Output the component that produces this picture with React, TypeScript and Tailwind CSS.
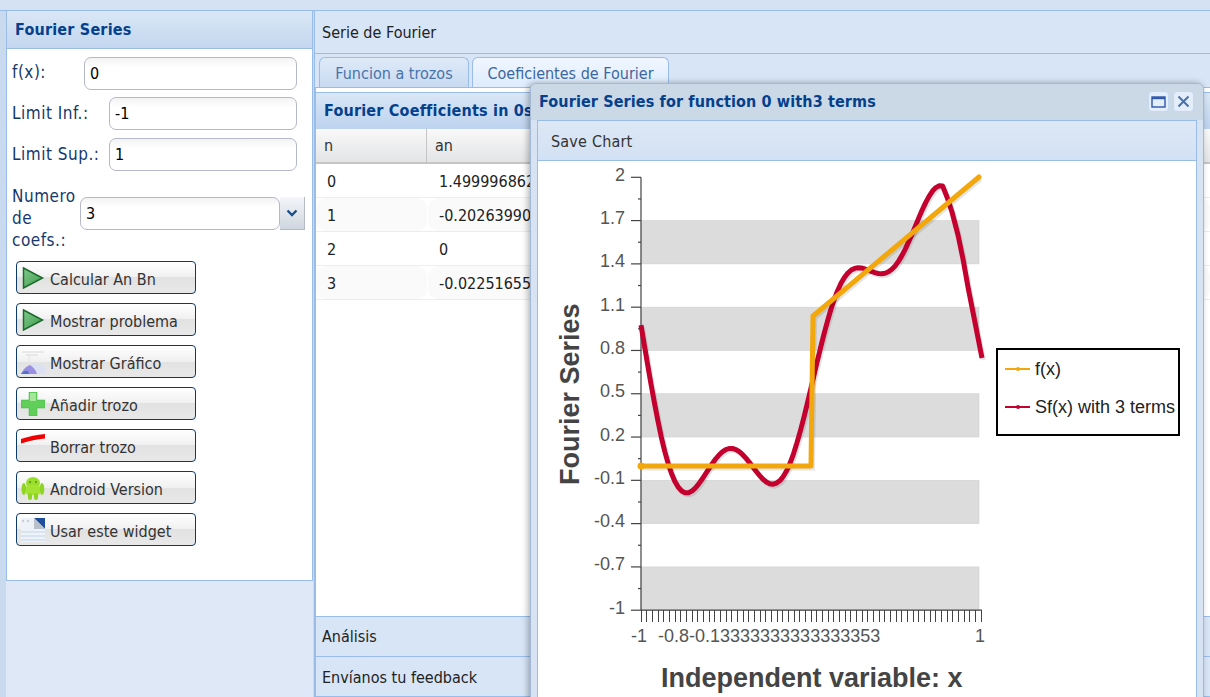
import React from 'react'

const UI_FONT = "font-['DejaVu_Sans_Condensed','Noto_Sans',sans-serif]"

function PlayIcon() {
  return (
    <svg width="24" height="24" viewBox="0 0 24 24">
      <defs>
        <linearGradient id="play" x1="0" y1="0" x2="1" y2="1">
          <stop offset="0" stopColor="#7fc98a" />
          <stop offset="1" stopColor="#3f9a4c" />
        </linearGradient>
      </defs>
      <path d="M2.5 2 L21.5 12 L2.5 22 Z" fill="url(#play)" stroke="#1d6a2c" strokeWidth="1.5" />
    </svg>
  )
}

function ChartIcon() {
  return (
    <svg width="24" height="24" viewBox="0 0 24 24">
      <path d="M1 2 H23 M5 5 H17" stroke="#d8d8d8" strokeWidth="1" />
      <path d="M8 6 V16" stroke="#e5e5e5" />
      <path d="M0 24 C3 17 8 13 15 14 L24 16 V24 Z" fill="#dbe0f2" />
      <path d="M0 24 C2 19 6 16 9 15 C12 17 15 20 16 24 Z" fill="#9a8fe0" />
      <path d="M0 24 C2 21 5 20 7 21 L8 24 Z" fill="#4f73c9" />
    </svg>
  )
}

function PlusIcon() {
  return (
    <svg width="24" height="24" viewBox="0 0 24 24">
      <path d="M8 0 H16 V8 H24 V16 H16 V24 H8 V16 H0 V8 H8 Z" fill="#5fcf5a" stroke="#45b045" strokeWidth="0.5" />
      <rect x="9" y="1" width="6" height="8" fill="#a4e79b" />
    </svg>
  )
}

function StrokeIcon() {
  return (
    <svg width="24" height="24" viewBox="0 0 24 24">
      <path d="M0 5 C8 2.5 16 0.5 24 0 V4.5 C16 5 8 7 0 9.5 Z" fill="#f00000" />
    </svg>
  )
}

function AndroidIcon() {
  return (
    <svg width="24" height="24" viewBox="0 0 24 24">
      <ellipse cx="12" cy="7" rx="7" ry="6" fill="#9ade2c" />
      <rect x="5" y="9" width="14" height="10" rx="3" fill="#a5e332" />
      <ellipse cx="2.8" cy="13" rx="2.3" ry="6" fill="#8fd425" />
      <ellipse cx="21" cy="13" rx="2.3" ry="6" fill="#8fd425" />
      <rect x="7" y="17" width="4" height="7" rx="2" fill="#8fd425" />
      <rect x="13" y="17" width="4" height="7" rx="2" fill="#8fd425" />
      <circle cx="9" cy="6" r="1" fill="#5a8a14" />
      <circle cx="15" cy="6" r="1" fill="#5a8a14" />
    </svg>
  )
}

function WidgetIcon() {
  return (
    <svg width="24" height="24" viewBox="0 0 24 24">
      <rect x="0" y="0" width="24" height="24" fill="#eef3f9" />
      <path d="M13 0 H24 V11 Z" fill="#1f4f9c" />
      <path d="M13 0 L24 11 H13 Z" fill="#b9c2cc" />
      <circle cx="2" cy="3" r="1.2" fill="#ccd" />
      <circle cx="7" cy="3" r="1.2" fill="#ccd" />
      <path d="M0 14 H24 M0 18 H24 M0 22 H24" stroke="#c4d6ea" strokeWidth="1.2" />
    </svg>
  )
}

const buttons = [
  { label: 'Calcular An Bn', icon: <PlayIcon /> },
  { label: 'Mostrar problema', icon: <PlayIcon /> },
  { label: 'Mostrar Gráfico', icon: <ChartIcon /> },
  { label: 'Añadir trozo', icon: <PlusIcon /> },
  { label: 'Borrar trozo', icon: <StrokeIcon /> },
  { label: 'Android Version', icon: <AndroidIcon /> },
  { label: 'Usar este widget', icon: <WidgetIcon /> },
]

const inputClass =
  'h-[33px] rounded-[7px] border border-[#b5b8c8] bg-gradient-to-b from-[#f3f3f3] to-white to-[30%] px-[5px] text-[16px] tracking-normal text-black flex items-center'

function Sidebar() {
  return (
    <div className="w-[307px] ml-[6px] flex flex-col shrink-0">
      <div className="border-x border-b border-[#99bce8] h-[570px] flex flex-col">
        <div className="h-[38px] shrink-0 border-b border-[#99bce8] bg-gradient-to-b from-[#dae7f6] to-[#c3d7ef] flex items-center px-2 text-[16px] tracking-[0.2px] font-bold text-[#04408c]">
          Fourier Series
        </div>
        <div className="flex-1 bg-white px-[5px] pt-2 text-[17px] tracking-[0.5px] text-[#15396b]">
          <div className="flex items-center gap-[10px] pr-[10px]">
            <span className="w-[62px] -mt-[2px]">f(x):</span>
            <div className={inputClass + ' flex-1'}>0</div>
          </div>
          <div className="flex items-center mt-[7px] pr-[10px]">
            <span className="w-[97px]">Limit Inf.:</span>
            <div className={inputClass + ' flex-1'}>-1</div>
          </div>
          <div className="flex items-center mt-2 pr-[10px]">
            <span className="w-[97px]">Limit Sup.:</span>
            <div className={inputClass + ' flex-1'}>1</div>
          </div>
          <div className="flex mt-[13px]">
            <span className="w-[68px] pt-[1px] pr-[2px] leading-[22px]">Numero de coefs.:</span>
            <div className="flex h-[33px] mt-[13px]">
              <div className={inputClass + ' w-[200px]'}>3</div>
              <div className="w-[25px] bg-gradient-to-b from-[#f4f6f9] to-[#cfd6df] border-r border-b border-[#b5b8c8] flex items-center justify-center">
                <svg width="12" height="8" viewBox="0 0 12 8">
                  <path d="M1.5 1.5 L6 6 L10.5 1.5" fill="none" stroke="#1d4f86" strokeWidth="2.4" />
                </svg>
              </div>
            </div>
          </div>
          <div className="flex flex-col gap-[9px] mt-[10px] ml-[4px] text-[16px] tracking-normal">
            {buttons.map((b) => (
              <div
                key={b.label}
                className="relative w-[180px] h-[33px] rounded-[4px] border border-[#0f3a68] bg-[linear-gradient(#ffffff,#f0f0f0_50%,#e2e2e2_50%,#e8e8e8)] flex items-center text-[#333]"
              >
                <span className="absolute left-1 top-1">{b.icon}</span>
                <span className="ml-[33px] mt-[4px]">{b.label}</span>
              </div>
            ))}
          </div>
        </div>
      </div>
      <div className="flex-1 bg-[#dfe8f6]" />
    </div>
  )
}

const rows = [
  ['0', '1.4999968623'],
  ['1', '-0.2026399057'],
  ['2', '0'],
  ['3', '-0.0225165518'],
]

function MainPanel() {
  return (
    <div className="flex-1 ml-[1px] flex flex-col border-l border-[#99bce8] min-w-0 bg-[#dfe8f6]">
      <div className="h-[43px] shrink-0 bg-[#d8e5f6] border-b border-[#99bce8] flex items-center px-[7px] pt-[2px] text-[16px] text-[#222]">
        Serie de Fourier
      </div>
      <div className="h-[34px] shrink-0 bg-[#d8e5f6] flex items-end pl-1 gap-[3px] border-b border-[#99bce8]">
        <div className="h-[30px] w-[150px] pt-[3px] rounded-t-[6px] border border-b-0 border-[#99bce8] bg-gradient-to-b from-[#dfeaf8] to-[#c8daf1] flex items-center justify-center text-[16px] text-[#4a73a8]">
          Funcion a trozos
        </div>
        <div className="h-[30px] w-[197px] pt-[3px] rounded-t-[6px] border border-b-0 border-[#99bce8] bg-gradient-to-b from-[#f0f6fe] to-[#deecfd] flex items-center justify-center text-[16px] text-[#3c679e]">
          Coeficientes de Fourier
        </div>
      </div>
      <div className="flex-1 min-h-0 border-l border-[#99bce8] flex flex-col bg-white">
        <div className="h-[37px] mt-[4px] shrink-0 bg-gradient-to-b from-[#dae7f6] to-[#bcd2ee] border-t border-[#99bce8] flex items-center px-2 text-[16px] tracking-[0.2px] font-bold text-[#04408c]">
          Fourier Coefficients in 0s
        </div>
        <div className="h-[35px] shrink-0 flex bg-gradient-to-b from-[#f9f9f9] to-[#e3e4e6] border-b-2 border-[#c5c5c5] text-[16px] text-[#333]">
          <div className="w-[111px] border-r border-[#c5c5c5] px-2 flex items-center">n</div>
          <div className="px-2 flex items-center">an</div>
        </div>
        {rows.map(([n, an], i) => (
          <div key={n} className="h-[34px] shrink-0 flex border-b border-[#ededed] text-[16px] text-[#222]">
            <div className={'w-[111px] px-[11px] pt-[3px] flex items-center rounded-[10px] ' + (i % 2 ? 'bg-[#fafafa]' : '')}>{n}</div>
            <div className={'flex-1 ml-[1px] px-[11px] pt-[3px] flex items-center rounded-[10px] ' + (i % 2 ? 'bg-[#fafafa]' : '')}>{an}</div>
          </div>
        ))}
        <div className="flex-1" />
        <div className="h-[41px] shrink-0 bg-[#d8e5f6] border-y border-[#99bce8] flex items-center px-[6px] text-[16px] text-[#222]">
          Análisis
        </div>
        <div className="h-[40px] shrink-0 bg-[#d8e5f6] border-b border-[#99bce8] flex items-center px-[6px] pt-[3px] text-[16px] text-[#222]">
          Envíanos tu feedback
        </div>
      </div>
    </div>
  )
}

// chart scale, in page pixels minus the chart origin (538, 161)
const ox = 538
const oy = 161
const xAt = (x: number) => 641 - ox + (x + 1) * 169.5
const yAt = (v: number) => 177.3 - oy + (2 - v) * 144.3

function series(x: number) {
  const p = Math.PI * x
  return (
    0.75 - 0.2026 * Math.cos(p) - 0.0225 * Math.cos(3 * p) +
    0.955 * Math.sin(p) - 0.159 * Math.sin(2 * p) + 0.318 * Math.sin(3 * p)
  )
}

function redPoints() {
  const pts: string[] = []
  for (let x = -1; x <= 0.79; x += 0.02) pts.push(xAt(x).toFixed(1) + ',' + yAt(series(x)).toFixed(1))
  // the tail falls off straighter than the series does
  const tail = [[947, 197], [952, 212], [958, 235], [963, 259], [968, 287], [982, 358]]
  tail.forEach(([x, y]) => pts.push(x - ox + ',' + (y - oy)))
  return pts.join(' ')
}

const orangePoints = [
  [641, 466], [811, 466], [813, 316], [979, 177],
].map(([x, y]) => x - ox + ',' + (y - oy)).join(' ')

const yLabels = ['2', '1.7', '1.4', '1.1', '0.8', '0.5', '0.2', '-0.1', '-0.4', '-0.7', '-1']

function Chart() {
  const red = redPoints()
  const xTicks = Array.from({ length: 61 }, (_, i) => 641 - ox + i * 5.67)
  return (
    <svg width="658" height="540" className="block">
      {[1.7, 1.1, 0.5, -0.1, -0.7].map((v) => (
        <rect key={v} x={xAt(-1)} y={yAt(v)} width="338" height={0.3 * 144.3} fill="#dcdcdc" stroke="#d0d0d0" strokeWidth="0.6" />
      ))}
      <path d={'M' + xAt(-1) + ' ' + yAt(2) + ' V' + yAt(-1)} stroke="#444" strokeWidth="1.2" />
      {yLabels.map((l, i) => {
        const y = yAt(2 - i * 0.3)
        return (
          <g key={l}>
            <path d={'M' + (xAt(-1) - 10) + ' ' + y + ' H' + xAt(-1)} stroke="#444" strokeWidth="1.2" />
            {i < 10 && <path d={'M' + (xAt(-1) - 3) + ' ' + (y + 21.65) + ' H' + xAt(-1)} stroke="#444" strokeWidth="1.2" />}
            <text x={xAt(-1) - 16} y={y + 3.5} textAnchor="end" fontSize="18" fill="#555" fontFamily="'Liberation Sans',sans-serif">{l}</text>
          </g>
        )
      })}
      <path d={'M' + xAt(-1) + ' ' + yAt(-1) + ' H' + (982 - ox)} stroke="#444" strokeWidth="1.2" />
      {xTicks.map((x) => (
        <path key={x} d={'M' + x + ' ' + yAt(-1) + ' v12'} stroke="#444" strokeWidth="1" shapeRendering="crispEdges" />
      ))}
      <g fontSize="18" fill="#555" fontFamily="'Liberation Sans',sans-serif">
        <text x={xAt(-1) - 10} y="481">-1</text>
        <text x={658 - ox} y="481">-0.8-0.13333333333333353</text>
        <text x={975 - ox} y="481">1</text>
      </g>
      <text x={661 - ox} y="526" fontSize="27" fontWeight="bold" fill="#444" fontFamily="'Liberation Sans',sans-serif">Independent variable: x</text>
      <text transform={'translate(' + (579 - ox) + ',' + (485 - oy) + ') rotate(-90)'} fontSize="27" fontWeight="bold" fill="#444" fontFamily="'Liberation Sans',sans-serif">Fourier Series</text>
      <polyline points={red} fill="none" stroke="#000" strokeOpacity="0.1" strokeWidth="5" transform="translate(1.5,2)" />
      <polyline points={red} fill="none" stroke="#c4002f" strokeWidth="5" strokeLinejoin="round" />
      <polyline points={orangePoints} fill="none" stroke="#000" strokeOpacity="0.1" strokeWidth="5" transform="translate(1.5,2)" />
      <polyline points={orangePoints} fill="none" stroke="#f2a80c" strokeWidth="5" strokeLinejoin="round" strokeLinecap="round" />
      <circle cx={641 - ox} cy={466 - oy} r="3.5" fill="#f2a80c" />
    </svg>
  )
}

function ChartWindow() {
  return (
    <div className="absolute left-[530px] top-[83px] w-[674px] h-[640px] rounded-t-[6px] border border-[#a3b8d4] bg-[#d7e3f3] shadow-[-2px_0_6px_rgba(0,0,0,0.3)] px-[6px]">
      <div className="h-[36px] -mx-[6px] px-2 rounded-t-[6px] bg-[#cbd8e6] flex items-center text-[16px] tracking-[0.12px] font-bold text-[#04408c]">
        Fourier Series for function 0 with3 terms
      </div>
      <div className="absolute right-[9px] top-[7px] flex gap-[4px]">
        <div className="w-[21px] h-[21px] rounded-[4px] border border-[#c3d9f3] bg-[#e4eefb] flex items-center justify-center">
          <svg width="15" height="12" viewBox="0 0 15 12">
            <rect x="1" y="1" width="13" height="10" fill="none" stroke="#2f55a8" strokeWidth="1.4" />
            <path d="M1 2.2 H14" stroke="#2f55a8" strokeWidth="2" />
          </svg>
        </div>
        <div className="w-[21px] h-[21px] rounded-[4px] border border-[#c3d9f3] bg-[#e4eefb] flex items-center justify-center">
          <svg width="13" height="13" viewBox="0 0 13 13">
            <path d="M1.5 1.5 L11.5 11.5 M11.5 1.5 L1.5 11.5" stroke="#4a72a8" strokeWidth="2" />
          </svg>
        </div>
      </div>
      <div className="border border-[#99bce8] bg-white">
        <div className="h-[40px] bg-gradient-to-b from-[#dee8f5] to-[#d2e1f4] border-b border-[#99bce8] flex items-center px-[13px] pt-[3px] text-[16px] tracking-[0.2px] text-[#333]">
          Save Chart
        </div>
        <div className="relative">
          <Chart />
          <div className="absolute left-[458px] top-[187px] w-[184px] h-[88px] border-2 border-black bg-white font-['Liberation_Sans',sans-serif] text-[18px] text-[#222]">
            <div className="flex items-center h-[22px] mt-[8px] pl-[7px]">
              <span className="relative w-[25px] h-[2px] bg-[#f2a80c] mr-[5px]">
                <span className="absolute left-[11px] -top-[1px] w-[4px] h-[4px] rounded-full bg-[#f2a80c]" />
              </span>
              f(x)
            </div>
            <div className="flex items-center h-[22px] mt-[16px] pl-[7px] whitespace-nowrap">
              <span className="relative w-[25px] h-[2px] bg-[#c4002f] mr-[5px] shrink-0">
                <span className="absolute left-[11px] -top-[1px] w-[4px] h-[4px] rounded-full bg-[#c4002f]" />
              </span>
              Sf(x) with 3 terms
            </div>
          </div>
        </div>
      </div>
    </div>
  )
}

export default function App() {
  return (
    <div className={'relative w-[1210px] h-[697px] overflow-hidden bg-[#c9d9ee] flex flex-col ' + UI_FONT}>
      <div className="h-[11px] shrink-0 bg-[#d5e2f3] border-b border-[#99bce8]" />
      <div className="flex-1 min-h-0 flex">
        <Sidebar />
        <MainPanel />
      </div>
      <ChartWindow />
    </div>
  )
}
